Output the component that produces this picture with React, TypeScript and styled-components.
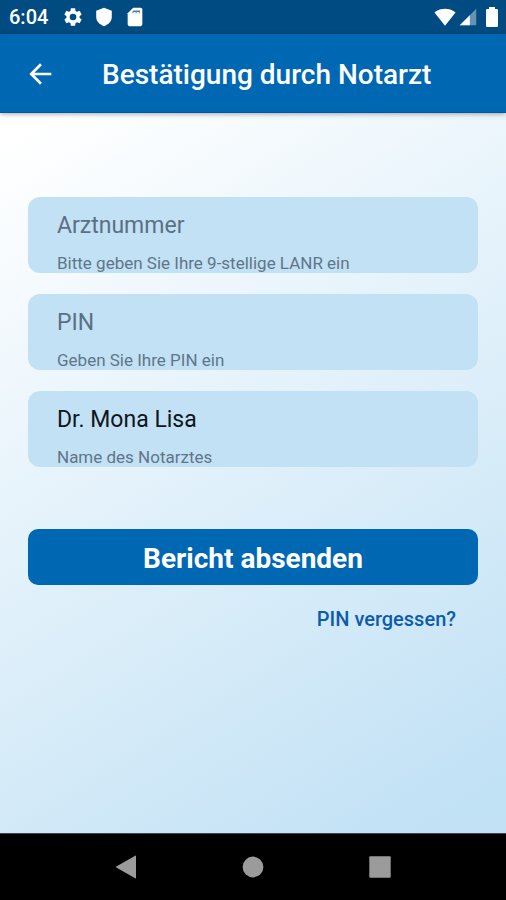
import React, { useId } from "react";
import styled, { createGlobalStyle } from "styled-components";

const GlobalStyle = createGlobalStyle`
  *, *::before, *::after { box-sizing: border-box; }
  body { margin: 0; font-family: Roboto, sans-serif; }
  button, input { font-family: inherit; }
`;

const Screen = styled.div`
  min-height: 100vh;
  display: flex;
  flex-direction: column;
  background: #000;
`;

const StatusBar = styled.div`
  height: 34px;
  padding: 0 2px 0 9px;
  display: flex;
  align-items: center;
  justify-content: space-between;
  background: #004c82;
  color: #fff;
`;

const StatusGroup = styled.div<{ $gap: number }>`
  display: flex;
  align-items: center;
  gap: ${({ $gap }) => $gap}px;
`;

const Clock = styled.span`
  font-size: 20px;
  font-weight: 500;
  line-height: 24px;
  margin-right: 5px;
`;

const AppBar = styled.header`
  position: relative;
  height: 79px;
  padding: 2px 24px 0;
  display: flex;
  align-items: center;
  gap: 46px;
  background: #0067b2;
  color: #fff;
  border-bottom: 1px solid #0058a5;
  box-shadow: 0 1px 5px rgba(0, 0, 0, 0.35);
`;

const BackButton = styled.button`
  display: flex;
  padding: 0;
  border: 0;
  background: none;
  color: inherit;
  cursor: pointer;
`;

const Title = styled.h1`
  margin: 0;
  padding-top: 2px;
  font-size: 28px;
  font-weight: 500;
  line-height: 36px;
  white-space: nowrap;
`;

const Content = styled.main`
  flex: 1;
  padding: 84px 28px 24px;
  background: linear-gradient(148deg, #fff 3%, #c1e1f5 95%);
`;

const Form = styled.form`
  display: flex;
  flex-direction: column;
`;

const Fields = styled.div`
  display: flex;
  flex-direction: column;
  gap: 21px;
`;

const FieldBox = styled.div`
  height: 76px;
  padding: 12px 29px 0;
  display: flex;
  flex-direction: column;
  gap: 10px;
  border-radius: 12px;
  background: #c2e1f5;
  overflow: hidden;
`;

const FieldInput = styled.input`
  width: 100%;
  height: 32px;
  flex: none;
  padding: 0;
  border: 0;
  outline: 0;
  background: none;
  color: #10161c;
  font-size: 23px;
  &::placeholder { color: #5a7083; opacity: 1; }
`;

const FieldHint = styled.label`
  flex: none;
  font-size: 17px;
  line-height: 24px;
  color: #607688;
`;

const SubmitButton = styled.button`
  height: 56px;
  margin-top: 62px;
  padding: 2px 0 0;
  border: 0;
  border-radius: 10px;
  background: #0067b2;
  color: #fff;
  font-size: 28px;
  font-weight: 700;
  cursor: pointer;
`;

const ForgotLink = styled.a`
  align-self: flex-end;
  margin: 22px 22px 0 0;
  font-size: 20px;
  font-weight: 500;
  line-height: 24px;
  color: #0d5cab;
  text-decoration: none;
`;

const NavBar = styled.nav`
  height: 67px;
  display: grid;
  grid-template-columns: repeat(3, 25%);
  justify-content: center;
  background: #000;
  border-top: 1px solid #3c464d;
`;

const NavButton = styled.button`
  display: flex;
  align-items: center;
  justify-content: center;
  padding: 0;
  border: 0;
  background: none;
  color: #9b9b9b;
  cursor: pointer;
`;

type IconProps = { size: number; children: React.ReactNode };

const Icon = ({ size, children }: IconProps) => (
  <svg width={size} height={size} viewBox="0 0 24 24" fill="currentColor" aria-hidden="true">
    {children}
  </svg>
);

type FieldProps = { hint: string; placeholder?: string; value?: string; type?: string };

const Field = ({ hint, placeholder, value, type = "text" }: FieldProps) => {
  const id = useId();
  return (
    <FieldBox>
      <FieldInput id={id} type={type} placeholder={placeholder} defaultValue={value} />
      <FieldHint htmlFor={id}>{hint}</FieldHint>
    </FieldBox>
  );
};

export default function App() {
  return (
    <>
      <GlobalStyle />
      <Screen>
        <StatusBar>
          <StatusGroup $gap={9}>
            <Clock>6:04</Clock>
            <Icon size={22}>
              <path d="M19.14 12.94c.04-.3.06-.61.06-.94 0-.32-.02-.64-.07-.94l2.03-1.58a.49.49 0 0 0 .12-.61l-1.92-3.32a.488.488 0 0 0-.59-.22l-2.39.96c-.5-.38-1.03-.7-1.62-.94l-.36-2.54a.484.484 0 0 0-.48-.41h-3.84c-.24 0-.43.17-.47.41l-.36 2.54c-.59.24-1.13.57-1.62.94l-2.39-.96c-.22-.08-.47 0-.59.22L2.74 8.87c-.12.21-.08.47.12.61l2.03 1.58c-.05.3-.09.63-.09.94s.02.64.07.94l-2.03 1.58a.49.49 0 0 0-.12.61l1.92 3.32c.12.22.37.29.59.22l2.39-.96c.5.38 1.03.7 1.62.94l.36 2.54c.05.24.24.41.48.41h3.84c.24 0 .44-.17.47-.41l.36-2.54c.59-.24 1.13-.56 1.62-.94l2.39.96c.22.08.47 0 .59-.22l1.92-3.32c.12-.22.07-.47-.12-.61l-2.01-1.58zM12 15.6A3.6 3.6 0 1 1 12 8.4a3.6 3.6 0 0 1 0 7.2z" />
            </Icon>
            <Icon size={22}>
              <path d="M12 2 3.5 5.2v6.6c0 4.9 3.5 8.5 8.5 10.2 5-1.7 8.5-5.3 8.5-10.2V5.2z" />
            </Icon>
            <Icon size={22}>
              <path d="M18 2h-8L4 8v12c0 1.1.9 2 2 2h12c1.1 0 2-.9 2-2V4c0-1.1-.9-2-2-2z" />
              <path d="M10 5h7.5v1.5H9z" fill="#004c82" opacity="0.7" />
              <path d="M9 6.5h1.5V8H9zM12.5 6.5H14V8h-1.5zM16 6.5h1.5V8H16z" fill="#004c82" opacity="0.5" />
            </Icon>
          </StatusGroup>
          <StatusGroup $gap={1}>
            <Icon size={22}>
              <path d="M12 21.5 23.5 7C23 6.6 18.7 3 12 3S1 6.6.5 7z" />
            </Icon>
            <Icon size={22}>
              <path d="M21 3v18H3z" opacity="0.4" />
              <path d="M14 10v11H3z" />
            </Icon>
            <Icon size={24}>
              <path d="M16.7 4H15V2H9v2H7.3C6.6 4 6 4.6 6 5.3v15.4c0 .7.6 1.3 1.3 1.3h9.4c.7 0 1.3-.6 1.3-1.3V5.3c0-.7-.6-1.3-1.3-1.3z" />
            </Icon>
          </StatusGroup>
        </StatusBar>
        <AppBar>
          <BackButton type="button" aria-label="Zurück">
            <Icon size={32}>
              <path d="M20.5 11H7.83l5.59-5.59L12 4l-8 8 8 8 1.41-1.41L7.83 13H20.5z" />
            </Icon>
          </BackButton>
          <Title>Bestätigung durch Notarzt</Title>
        </AppBar>
        <Content>
          <Form onSubmit={(event) => event.preventDefault()}>
            <Fields>
              <Field placeholder="Arztnummer" hint="Bitte geben Sie Ihre 9-stellige LANR ein" />
              <Field placeholder="PIN" type="password" hint="Geben Sie Ihre PIN ein" />
              <Field value="Dr. Mona Lisa" hint="Name des Notarztes" />
            </Fields>
            <SubmitButton type="submit">Bericht absenden</SubmitButton>
            <ForgotLink href="#pin">PIN vergessen?</ForgotLink>
          </Form>
        </Content>
        <NavBar>
          <NavButton type="button" aria-label="Zurück">
            <Icon size={24}>
              <path d="M21 1v22q0 .8-.8.3L1.3 12.5q-.6-.5 0-1L20.2.7Q21 .2 21 1z" />
            </Icon>
          </NavButton>
          <NavButton type="button" aria-label="Startbildschirm">
            <Icon size={24}>
              <circle cx="12" cy="12" r="10.4" />
            </Icon>
          </NavButton>
          <NavButton type="button" aria-label="Übersicht">
            <Icon size={24}>
              <rect x="1.3" y="1.3" width="21.4" height="21.4" rx="1" />
            </Icon>
          </NavButton>
        </NavBar>
      </Screen>
    </>
  );
}
